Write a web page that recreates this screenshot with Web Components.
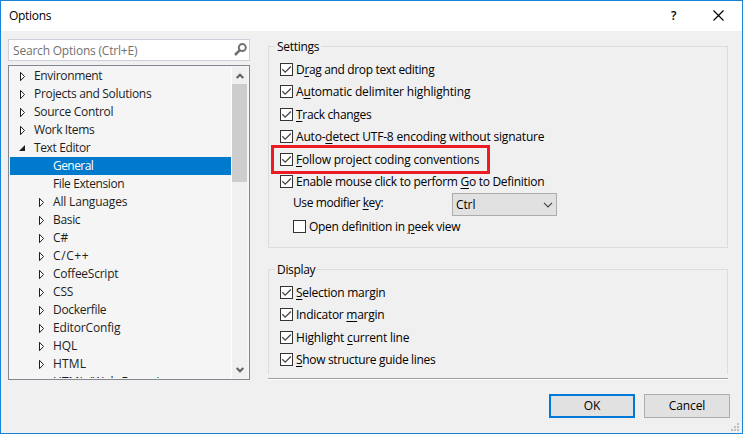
<!DOCTYPE html>
<html lang="en"><head><meta charset="utf-8"><title>Options</title>
<style>
html,body{margin:0;height:100%;overflow:hidden}
body{font:12px/18px "Open Sans","Noto Sans",sans-serif;color:#000}
</style></head><body>
<options-dialog></options-dialog>
<script>
function define(name, html, init){
  const t=document.createElement('template'); t.innerHTML=html;
  customElements.define(name, class extends HTMLElement{
    connectedCallback(){
      if(this.shadowRoot) return;
      const r=this.attachShadow({mode:'open'});
      if(init) init(this, t.content, r); else r.append(t.content.cloneNode(true));
    }
  });
}
const plain=(el,c,r)=>r.append(c.cloneNode(true));

/* Label whose tracking is set so that it spans a given width; "_" marks the access key. */
define('fit-label', `<style>:host{display:inline-block;white-space:pre;line-height:18px}
span{display:inline-block}u{text-decoration:underline;text-decoration-thickness:1px;text-underline-offset:2px}</style><span></span>`,
(el,c,r)=>{
  plain(el,c,r);
  const s=r.querySelector('span'), parts=el.getAttribute('text').split('_');
  s.append(parts[0]);
  if(parts[1]){const u=document.createElement('u');u.textContent=parts[1][0];s.append(u,parts[1].slice(1));}
  const w=+el.getAttribute('w')-.7, n=s.textContent.length;
  s.style.letterSpacing=((w-s.getBoundingClientRect().width)/n)+'px';
});

define('title-bar', `<style>:host{display:flex;height:30px;background:#fff;align-items:center;padding:0 18px 0 8px;flex:none}
fit-label{flex:1}svg{display:block;margin-top:-1px}.q{font:600 12px/18px "Open Sans",sans-serif;margin:-1px 36px 0 0;width:6px}</style>
<fit-label text="Options" w="43"></fit-label>
<span class="q">?</span>
<svg width="11" height="11" viewBox="0 0 11 11"><path d="M.5 .5l10 10M10.500 .5l-10 10" stroke="#000" stroke-width="1.15"/></svg>`);

define('search-box', `<style>:host{display:flex;box-sizing:border-box;height:22px;border:1px solid #cccedb;background:#fff;align-items:center;padding:0 2px 0 4px;color:#717171;justify-content:space-between}svg{display:block;margin-top:-1px}fit-label{margin-top:2px}</style>
<fit-label text="Search Options (Ctrl+E)" w="125"></fit-label>
<svg width="13" height="13" viewBox="0 0 13 13"><circle cx="8.300" cy="4.600" r="3.500" fill="none" stroke="#717171" stroke-width="2"/><path d="M5.800 7.200L1 12" stroke="#717171" stroke-width="2.600"/></svg>`);

define('tree-row', `<style>:host{display:flex;height:18px;flex:none;color:#1e1e1e;padding-left:9px}
:host([child]){padding-left:28px}:host([selected]){background:#007acc;color:#fff}
i{width:15px;height:18px;display:flex;align-items:center}svg{display:block}</style><i></i><fit-label></fit-label>`,
(el,c,r)=>{
  const f=c.cloneNode(true), l=f.querySelector('fit-label');
  l.setAttribute('text',el.getAttribute('text'));l.setAttribute('w',el.getAttribute('w'));
  const k=el.getAttribute('icon');
  if(k==='closed') f.querySelector('i').innerHTML='<svg width="7" height="10" viewBox="0 0 7 10"><path d="M1.500 1.300v8.400L5.500 5.500z" fill="#fff" stroke="#1e1e1e"/></svg>';
  if(k==='open') f.querySelector('i').innerHTML='<svg width="7" height="10" viewBox="0 0 7 10"><path d="M6 2v6H0z" fill="#1e1e1e"/></svg>';
  r.append(f);
});

define('scroll-bar', `<style>:host{display:flex;flex-direction:column;width:15px;border-left:1px solid #fff;background:#f0f0f0;flex:none}
b{height:17px;display:flex;align-items:center;justify-content:center}.t{height:98px;background:#cdcdcd}.s{flex:1}</style>
<b><svg width="8" height="6" viewBox="0 0 8 6"><path d="M.7 5L4 1.700L7.300 5" fill="none" stroke="#606060" stroke-width="2"/></svg></b><div class="t"></div><div class="s"></div>
<b><svg width="8" height="6" viewBox="0 0 8 6"><path d="M.7 1L4 4.300L7.300 1" fill="none" stroke="#606060" stroke-width="2"/></svg></b>`);

define('option-tree', `<style>:host{display:flex;box-sizing:border-box;height:315px;border:1px solid #828790;background:#f5f5f5;padding:1px 2px 1px 1px}
.l{flex:1;display:flex;flex-direction:column;overflow:hidden}</style><div class="l"><slot></slot></div><scroll-bar></scroll-bar>`);

define('check-item', `<style>:host{display:flex;height:13px;align-items:center;gap:3px}
i{box-sizing:border-box;width:13px;height:13px;border:1px solid #333;background:#fff;flex:none}svg{display:none}:host([checked]) svg{display:block}</style>
<i><svg width="11" height="11" viewBox="0 0 11 11"><path d="M1.300 5.300L4.200 8.200L9.900 2.500" fill="none" stroke="#444" stroke-width="1.300"/></svg></i><fit-label></fit-label>`,
(el,c,r)=>{
  const f=c.cloneNode(true), l=f.querySelector('fit-label');
  l.setAttribute('text',el.getAttribute('text'));l.setAttribute('w',el.getAttribute('w'));
  r.append(f);
});

define('group-box', `<style>:host{display:grid;box-sizing:border-box;grid-template-rows:9px 1fr}
.h{display:flex;height:1px;margin-top:8px;align-items:center;gap:2px}.h:before,.h:after{content:"";height:1px;background:#dcdcdc}
.h:before{width:7px}.h:after{flex:1}fit-label{flex:none}
.b{border:1px solid #dcdcdc;border-top:0;padding:0 0 0 11px}:host([open]) .b{border-bottom:0}</style>
<div class="h"><fit-label></fit-label></div><div class="b"><slot></slot></div>`,
(el,c,r)=>{
  const f=c.cloneNode(true), l=f.querySelector('fit-label');
  l.setAttribute('text',el.getAttribute('text'));l.setAttribute('w',el.getAttribute('w'));
  r.append(f);
});

define('drop-down', `<style>:host{display:flex;box-sizing:border-box;width:105px;height:23px;border:1px solid #adadad;background:#e1e1e1;align-items:center;justify-content:space-between;padding:0 3px}fit-label{margin-top:1px}</style>
<fit-label text="Ctrl" w="20"></fit-label><svg width="10" height="6" viewBox="0 0 10 6"><path d="M1 .8L5 4.800L9 .8" fill="none" stroke="#444" stroke-width="1.200"/></svg>`);

define('push-button', `<style>:host{display:flex;box-sizing:border-box;width:86px;height:24px;border:1px solid #adadad;background:#e1e1e1;align-items:center;justify-content:center}
:host([primary]){border:2px solid #0078d7}</style><slot></slot>`);

define('size-grip', `<style>:host{display:block;width:8px;height:8px}svg{display:block}</style>
<svg width="8" height="8" viewBox="0 0 8 8" fill="#bfbfbf"><path d="M6 0h2v2H6zM3 3h2v2H3zM6 3h2v2H6zM0 6h2v2H0zM3 6h2v2H3zM6 6h2v2H6z"/></svg>`);

define('options-dialog', `<style>:host{display:flex;flex-direction:column;box-sizing:border-box;width:743px;height:434px;border:1px solid #1883d7;background:#f0f0f0;position:relative}
.m{display:grid;grid-template-columns:242px 460px;column-gap:18px;padding:8px 0 0 7px}
.left{display:flex;flex-direction:column;gap:4px}
.right{display:flex;flex-direction:column}
.s{height:210px;margin-top:-1px}.d{height:113px;margin-top:13px}
.c{display:grid;grid-template-rows:22px 23px 22px 23px 22px 13px;padding-top:16px}
.d .c{grid-template-rows:22px 23px 22px 13px}
.sep{height:1px;background:#a0a0a0;border-bottom:1px solid #fff;margin-top:4px}
.row{display:flex;justify-content:space-between;align-items:flex-start;padding:5px 170px 0 13px;height:23px}
.row fit-label{margin-top:1px}
.peek{margin:4px 0 0 13px}
.f{display:flex;gap:9px;justify-content:flex-end;padding:14px 12px 0 0}
.red{position:absolute;left:270px;top:144px;box-sizing:border-box;width:219px;height:29px;border:3px solid #ed1c24}
size-grip{position:absolute;right:3px;bottom:2px}</style>
<title-bar></title-bar>
<div class="m"><div class="left"><search-box></search-box>
<option-tree>
<tree-row icon="closed" text="Environment" w="69"></tree-row>
<tree-row icon="closed" text="Projects and Solutions" w="118"></tree-row>
<tree-row icon="closed" text="Source Control" w="80"></tree-row>
<tree-row icon="closed" text="Work Items" w="61"></tree-row>
<tree-row icon="open" text="Text Editor" w="57"></tree-row>
<tree-row child selected text="General" w="41"></tree-row>
<tree-row child text="File Extension" w="72"></tree-row>
<tree-row child icon="closed" text="All Languages" w="75"></tree-row>
<tree-row child icon="closed" text="Basic" w="28"></tree-row>
<tree-row child icon="closed" text="C#" w="16"></tree-row>
<tree-row child icon="closed" text="C/C++" w="37"></tree-row>
<tree-row child icon="closed" text="CoffeeScript" w="66"></tree-row>
<tree-row child icon="closed" text="CSS" w="21"></tree-row>
<tree-row child icon="closed" text="Dockerfile" w="54"></tree-row>
<tree-row child icon="closed" text="EditorConfig" w="68"></tree-row>
<tree-row child icon="closed" text="HQL" w="25"></tree-row>
<tree-row child icon="closed" text="HTML" w="34"></tree-row>
<tree-row child icon="closed" text="HTML (Web Forms)" w="108"></tree-row>
</option-tree></div>
<div class="right">
<group-box class="s" text="Settings" w="43"><div class="c">
<check-item checked text="D_rag and drop text editing" w="139"></check-item>
<check-item checked text="A_utomatic delimiter highlighting" w="175"></check-item>
<check-item checked text="_Track changes" w="76"></check-item>
<check-item checked text="Auto-_detect UTF-8 encoding without signature" w="249"></check-item>
<check-item checked text="_Follow project coding conventions" w="184"></check-item>
<check-item checked text="Enable mouse click to perform _Go to Definition" w="249"></check-item></div>
<div class="row"><fit-label text="Use modifier _key:" w="91"></fit-label><drop-down></drop-down></div>
<check-item class="peek" text="Open definition in _peek view" w="152"></check-item>
</group-box>
<group-box open class="d" text="Display" w="39"><div class="c">
<check-item checked text="_Selection margin" w="90"></check-item>
<check-item checked text="Indicator _margin" w="89"></check-item>
<check-item checked text="Highlight _current line" w="114"></check-item>
<check-item checked text="_Show structure guide lines" w="140"></check-item></div>
</group-box>
<div class="sep"></div></div></div>
<div class="f"><push-button primary><fit-label text="OK" w="17"></fit-label></push-button><push-button><fit-label text="Cancel" w="37"></fit-label></push-button></div>
<div class="red"></div><size-grip></size-grip>`);
</script>
</body></html>
